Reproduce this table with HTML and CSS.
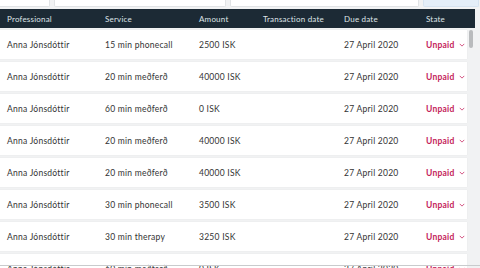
FILE: index.html
```html
<!DOCTYPE html>
<html>
<head>
<meta charset="utf-8">
<link rel="stylesheet" href="styles.css">
</head>
<body>
<div class="filters">
  <div class="input w1"></div>
  <div class="input w2"></div>
  <div class="input w3"></div>
  <div class="input blue"></div>
</div>
<div class="table">
  <div class="head">
    <span>Professional</span><span>Service</span><span>Amount</span><span>Transaction date</span><span>Due date</span><span>State</span>
  </div>
  <div class="body">
    <div class="rows">
      <div class="row"><span>Anna Jónsdóttir</span><span>15 min phonecall</span><span>2500 ISK</span><span></span><span>27 April 2020</span><span class="state">Unpaid <svg viewBox="0 0 8 5" class="chev"><path d="M1 1l3 3 3-3" fill="none" stroke="currentColor" stroke-width="1"/></svg></span></div>
      <div class="row"><span>Anna Jónsdóttir</span><span>20 min meðferð</span><span>40000 ISK</span><span></span><span>27 April 2020</span><span class="state">Unpaid <svg viewBox="0 0 8 5" class="chev"><path d="M1 1l3 3 3-3" fill="none" stroke="currentColor" stroke-width="1"/></svg></span></div>
      <div class="row"><span>Anna Jónsdóttir</span><span>60 min meðferð</span><span>0 ISK</span><span></span><span>27 April 2020</span><span class="state">Unpaid <svg viewBox="0 0 8 5" class="chev"><path d="M1 1l3 3 3-3" fill="none" stroke="currentColor" stroke-width="1"/></svg></span></div>
      <div class="row"><span>Anna Jónsdóttir</span><span>20 min meðferð</span><span>40000 ISK</span><span></span><span>27 April 2020</span><span class="state">Unpaid <svg viewBox="0 0 8 5" class="chev"><path d="M1 1l3 3 3-3" fill="none" stroke="currentColor" stroke-width="1"/></svg></span></div>
      <div class="row"><span>Anna Jónsdóttir</span><span>20 min meðferð</span><span>40000 ISK</span><span></span><span>27 April 2020</span><span class="state">Unpaid <svg viewBox="0 0 8 5" class="chev"><path d="M1 1l3 3 3-3" fill="none" stroke="currentColor" stroke-width="1"/></svg></span></div>
      <div class="row"><span>Anna Jónsdóttir</span><span>30 min phonecall</span><span>3500 ISK</span><span></span><span>27 April 2020</span><span class="state">Unpaid <svg viewBox="0 0 8 5" class="chev"><path d="M1 1l3 3 3-3" fill="none" stroke="currentColor" stroke-width="1"/></svg></span></div>
      <div class="row"><span>Anna Jónsdóttir</span><span>30 min therapy</span><span>3250 ISK</span><span></span><span>27 April 2020</span><span class="state">Unpaid <svg viewBox="0 0 8 5" class="chev"><path d="M1 1l3 3 3-3" fill="none" stroke="currentColor" stroke-width="1"/></svg></span></div>
      <div class="row"><span>Anna Jónsdóttir</span><span>60 min meðferð</span><span>0 ISK</span><span></span><span>27 April 2020</span><span class="state">Unpaid <svg viewBox="0 0 8 5" class="chev"><path d="M1 1l3 3 3-3" fill="none" stroke="currentColor" stroke-width="1"/></svg></span></div>
    </div>
    <div class="scroll"><div class="thumb"></div></div>
  </div>
</div>
<div class="bottomline"></div>
</body>
</html>
```
FILE: styles.css
```css
html, body {
  margin: 0;
  padding: 0;
  height: 268px;
  overflow: hidden;
}
body {
  background: #f1f2f3;
  font-family: Lato, "Open Sans", sans-serif;
  font-size: 8.5px;
  letter-spacing: 0.25px;
  color: #333;
  position: relative;
}
.filters {
  display: flex;
  gap: 4px;
  height: 7px;
  padding-bottom: 2px;
}
.input {
  background: #fff;
  height: 6px;
  border: 1px solid #e1e3e5;
  border-top: 0;
  border-radius: 0 0 2px 2px;
}
.w1 { width: 50px; margin-left: -2px; }
.w2 { width: 170px; }
.w3 { width: 187px; }
.input.blue { width: 54px; background: #e4eef8; border-color: #d6e3f0; }
.table {
  width: 475px;
}
.head {
  display: grid;
  grid-template-columns: 98px 94px 64px 81px 82px 1fr;
  padding-left: 7px;
  height: 19px;
  align-items: center;
  background: #1c2a35;
  color: #dfe4e8;
  font-size: 8px;
  letter-spacing: 0.2px;
}
.body {
  display: flex;
  gap: 2px;
  padding-top: 2px;
}
.rows {
  width: 467px;
  display: flex;
  flex-direction: column;
  gap: 3px;
}
.row {
  display: grid;
  grid-template-columns: 98px 94px 64px 81px 82px 1fr;
  padding-left: 7px;
  height: 29px;
  align-items: center;
  background: #fff;
  box-shadow: 0 0 1px rgba(0,0,0,0.08);
}
.state {
  color: #c41e5b;
  font-weight: bold;
  display: flex;
  align-items: center;
  gap: 4px;
}
.chev {
  width: 6px;
  height: 4px;
}
.scroll {
  width: 6px;
}
.thumb {
  width: 4px;
  height: 18px;
  border-radius: 2px;
  background: #b9bbbd;
}
.bottomline {
  position: absolute;
  left: 0;
  right: 0;
  top: 265px;
  height: 1px;
  background: #c9cbcd;
}
```
